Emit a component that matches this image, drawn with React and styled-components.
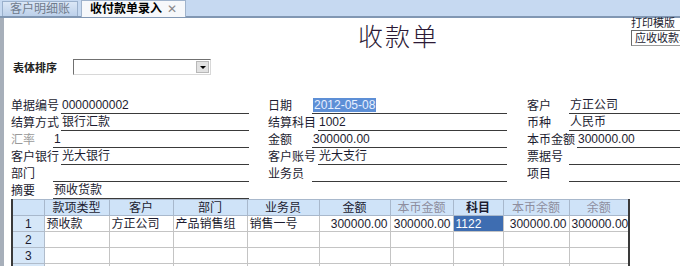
import React from "react";
import styled, { createGlobalStyle } from "styled-components";

const Global = createGlobalStyle`
  html, body {
    margin: 0;
    padding: 0;
    background: #fff;
    overflow: hidden;
  }
  body {
    font-family: "Liberation Sans", "Noto Sans CJK SC", sans-serif;
    font-size: 12px;
    color: #1c1c30;
  }
`;

const Page = styled.div`
  width: 680px;
  height: 266px;
  overflow: hidden;
  display: flex;
  flex-direction: column;
`;

const TabBar = styled.div`
  height: 16px;
  background: #c6d9f1;
  border-bottom: 2px solid #8197b3;
  display: flex;
  align-items: flex-end;
  gap: 3px;
  padding-left: 2px;
`;

const Tab = styled.div`
  height: ${(p) => (p.$active ? "17px" : "15px")};
  margin-bottom: ${(p) => (p.$active ? "-1px" : "0")};
  padding: 0 ${(p) => (p.$active ? "8px" : "7px")};
  display: flex;
  align-items: center;
  gap: 5px;
  box-sizing: border-box;
  border: 1px solid ${(p) => (p.$active ? "#9fb3cc" : "#9ab0cc")};
  border-bottom: none;
  background: ${(p) =>
    p.$active ? "#f6f8fb" : "linear-gradient(#dbe7f6, #bcd0ea)"};
  color: ${(p) => (p.$active ? "#000" : "#6f7b8c")};
  font-weight: ${(p) => (p.$active ? 700 : 400)};
  font-size: 12px;
  line-height: 14px;
  white-space: nowrap;
`;

const Close = styled.span`
  color: #888;
  font-weight: 400;
  font-size: 12px;
`;

const Body = styled.div`
  flex: 1;
  border-left: 4px solid #a7afba;
  display: flex;
  flex-direction: column;
`;

const Header = styled.div`
  height: 40px;
  display: flex;
  justify-content: space-between;
`;

const Title = styled.div`
  margin-left: 354px;
  margin-top: -1px;
  font-family: "Noto Sans CJK SC", sans-serif;
  font-weight: 300;
  font-size: 25px;
  letter-spacing: 2px;
  color: #2c1a36;
`;

const PrintBox = styled.div`
  display: flex;
  flex-direction: column;
  gap: 1px;
  margin-top: -1px;
  width: 49px;
  font-size: 11px;
  line-height: 12px;
`;

const PrintInput = styled.div`
  height: 16px;
  box-sizing: border-box;
  border: 1px solid #9a9a9a;
  border-right: none;
  border-top-color: #6a6a6a;
  border-left-color: #6a6a6a;
  padding-left: 3px;
  white-space: nowrap;
  overflow: hidden;
  line-height: 14px;
  font-size: 11px;
`;

const SortRow = styled.div`
  height: 16px;
  display: flex;
  align-items: center;
  gap: 16px;
  padding-left: 9px;
  margin-top: 1px;
`;

const SortLabel = styled.span`
  font-size: 11px;
  font-weight: 700;
  color: #222;
`;

const Select = styled.div`
  width: 138px;
  height: 16px;
  box-sizing: border-box;
  border: 1px solid #d8d8d8;
  border-top-color: #707070;
  border-left-color: #707070;
  display: flex;
  justify-content: flex-end;
  align-items: stretch;
  padding: 1px;
`;

const DropBtn = styled.div`
  width: 13px;
  background: #e2e2e2;
  border: 1px solid #b8b8b8;
  box-sizing: border-box;
  display: flex;
  align-items: center;
  justify-content: center;
  &::after {
    content: "";
    border-left: 3px solid transparent;
    border-right: 3px solid transparent;
    border-top: 3px solid #000;
  }
`;

const Form = styled.div`
  margin-top: 22px;
  display: flex;
  padding-left: 7px;
`;

const Column = styled.div`
  width: ${(p) => p.$w}px;
  margin-right: ${(p) => p.$gap || 0}px;
  display: flex;
  flex-direction: column;
  flex: ${(p) => (p.$grow ? 1 : "none")};
`;

const Field = styled.div`
  height: 17px;
  display: flex;
  align-items: flex-end;
`;

const Label = styled.span`
  min-width: ${(p) => p.$min}px;
  padding-right: 2px;
  line-height: 15px;
  white-space: nowrap;
  color: ${(p) => (p.$muted ? "#9a9a9a" : "#1c1c30")};
`;

const Value = styled.div`
  flex: 1;
  height: 15px;
  line-height: 14px;
  border-bottom: 1px solid #3a3a3a;
  padding-left: 1px;
  white-space: nowrap;
`;

const Selected = styled.span`
  background: #5d8fd6;
  color: #e8f0ff;
  padding: 0 1px;
`;

const Table = styled.table`
  margin-top: 0;
  margin-left: 7px;
  border-collapse: collapse;
  table-layout: fixed;
  width: 617px;
  border-left: 2px solid #3a3a3a;
  border-right: 2px solid #3a3a3a;
  border-top: 1px solid #555;
`;

const Th = styled.th`
  height: 15px;
  line-height: 14px;
  padding: 0;
  background: #cfe3f8;
  border: 1px solid #a8b8cc;
  font-weight: ${(p) => (p.$bold ? 700 : 400)};
  color: ${(p) => (p.$muted ? "#8e8e9e" : "#1c1c30")};
  font-size: 12px;
  text-align: center;
`;

const RowNo = styled.td`
  height: 15px;
  line-height: 14px;
  padding: 0;
  background: #d6e7f8;
  border: 1px solid #b0bccb;
  text-align: center;
  font-size: 12px;
`;

const Td = styled.td`
  height: 15px;
  line-height: 14px;
  padding: 0 2px;
  border: 1px solid #c4c4c4;
  text-align: ${(p) => (p.$num ? "right" : "left")};
  background: ${(p) => (p.$sel ? "#3e6db1" : "#fff")};
  color: ${(p) => (p.$sel ? "#fff" : "#1c1c30")};
  white-space: nowrap;
  overflow: hidden;
  font-size: 12px;
`;

const columns = [
  { key: "no", w: 32, label: "" },
  { key: "type", w: 65, label: "款项类型" },
  { key: "cust", w: 64, label: "客户" },
  { key: "dept", w: 74, label: "部门" },
  { key: "staff", w: 72, label: "业务员" },
  { key: "amt", w: 71, label: "金额", num: true },
  { key: "lamt", w: 63, label: "本币金额", num: true, muted: true },
  { key: "acct", w: 50, label: "科目", bold: true },
  { key: "lbal", w: 66, label: "本币余额", num: true, muted: true },
  { key: "bal", w: 60, label: "余额", num: true, muted: true },
];

const rows = [
  {
    type: "预收款",
    cust: "方正公司",
    dept: "产品销售组",
    staff: "销售一号",
    amt: "300000.00",
    lamt: "300000.00",
    acct: "1122",
    lbal: "300000.00",
    bal: "300000.00",
  },
  {},
  {},
  {},
];

const col1 = [
  { label: "单据编号", value: "0000000002" },
  { label: "结算方式", value: "银行汇款" },
  { label: "汇率", value: "1", muted: true },
  { label: "客户银行", value: "光大银行" },
  { label: "部门", value: "" },
  { label: "摘要", value: "预收货款" },
];

const col2 = [
  { label: "日期", value: <Selected>2012-05-08</Selected> },
  { label: "结算科目", value: "1002" },
  { label: "金额", value: "300000.00" },
  { label: "客户账号", value: "光大支行" },
  { label: "业务员", value: "" },
];

const col3 = [
  { label: "客户", value: "方正公司" },
  { label: "币种", value: "人民币" },
  { label: "本币金额", value: "300000.00" },
  { label: "票据号", value: "" },
  { label: "项目", value: "" },
];

const Fields = ({ items, min }) =>
  items.map((f) => (
    <Field key={f.label}>
      <Label $min={min} $muted={f.muted}>
        {f.label}
      </Label>
      <Value>{f.value}</Value>
    </Field>
  ));

export default function App() {
  return (
    <Page>
      <Global />
      <TabBar>
        <Tab>客户明细账</Tab>
        <Tab $active>
          收付款单录入<Close>✕</Close>
        </Tab>
      </TabBar>
      <Body>
        <Header>
          <Title>收款单</Title>
          <PrintBox>
            <span>打印模版</span>
            <PrintInput>应收收款单</PrintInput>
          </PrintBox>
        </Header>
        <SortRow>
          <SortLabel>表体排序</SortLabel>
          <Select>
            <DropBtn />
          </Select>
        </SortRow>
        <Form>
          <Column $w={238} $gap={19}>
            <Fields items={col1} min={40} />
          </Column>
          <Column $w={239} $gap={20}>
            <Fields items={col2} min={42} />
          </Column>
          <Column $grow>
            <Fields items={col3} min={40} />
          </Column>
        </Form>
        <Table>
          <colgroup>
            {columns.map((c) => (
              <col key={c.key} style={{ width: c.w }} />
            ))}
          </colgroup>
          <thead>
            <tr>
              {columns.map((c) => (
                <Th key={c.key} $bold={c.bold} $muted={c.muted}>
                  {c.label}
                </Th>
              ))}
            </tr>
          </thead>
          <tbody>
            {rows.map((r, i) => (
              <tr key={i}>
                <RowNo>{i + 1}</RowNo>
                {columns.slice(1).map((c) => (
                  <Td
                    key={c.key}
                    $num={c.num}
                    $sel={c.key === "acct" && r.acct}
                  >
                    {r[c.key] || ""}
                  </Td>
                ))}
              </tr>
            ))}
          </tbody>
        </Table>
      </Body>
    </Page>
  );
}
